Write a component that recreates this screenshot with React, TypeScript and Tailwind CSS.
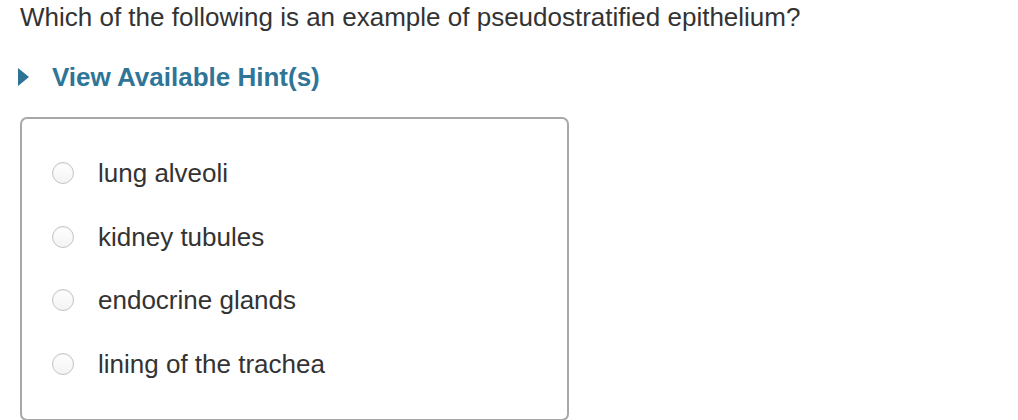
import React from "react";

const options = ["lung alveoli", "kidney tubules", "endocrine glands", "lining of the trachea"];

const App: React.FC = () => {
  return (
    <div className="min-h-[420px] bg-white text-[#333333] font-['Liberation_Sans',Arial,sans-serif]">
      {/* Question */}
      <p className="pl-5 pt-[2px] text-[26px] leading-[30px]">
        Which of the following is an example of pseudostratified epithelium?
      </p>

      {/* Hint toggle */}
      <div className="mt-[30px] flex items-center pl-[18px]">
        <svg width="11" height="18" viewBox="0 0 11 18" className="block h-[18px] w-[11px] shrink-0">
          <polygon points="0,0 11,9 0,18" fill="#2e7395" />
        </svg>
        <span className="ml-[23px] text-[26px] leading-[30px] font-bold text-[#2f7597]">
          View Available Hint(s)
        </span>
      </div>

      {/* Answer choices */}
      <div className="ml-5 mt-[25px] w-[549px] rounded-[7px] border-2 border-[#a8a8a8] pl-[30px] pt-[39px] pb-[40px]">
        <ul className="flex flex-col gap-[33.5px]">
          {options.map((o) => (
            <li key={o} className="flex items-center">
              <span className="h-[22px] w-[22px] shrink-0 rounded-full border border-[#c4c4c4] bg-gradient-to-b from-white to-[#f3f3f3] shadow-[inset_0_1px_1px_rgba(0,0,0,0.06)]" />
              <span className="ml-6 text-[26px] leading-[30px]">{o}</span>
            </li>
          ))}
        </ul>
      </div>
    </div>
  );
};

export default App;
